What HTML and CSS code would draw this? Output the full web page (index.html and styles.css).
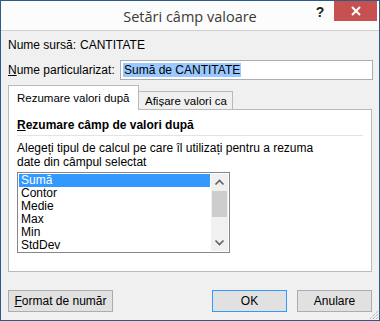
FILE: index.html
```html
<!DOCTYPE html>
<html lang="ro">
<head>
    <meta charset="UTF-8">
    <meta name="viewport" content="width=device-width, initial-scale=1.0">
    <title>Setări câmp valoare</title>
    <link rel="stylesheet" href="styles.css">
</head>
<body>
    <div class="dialog">
        <div class="titlebar">
            <span></span>
            <div class="title">Setări câmp valoare</div>
            <div class="controls">
                <span class="help">?</span>
                <span class="close">
                    <svg width="10" height="10" viewBox="0 0 10 10">
                        <path d="M1 1 L9 9 M9 1 L1 9" stroke="#fff" stroke-width="2"/>
                    </svg>
                </span>
            </div>
        </div>

        <div class="content">
            <div class="row source">
                <span class="label-src">Nume sursă:</span>
                <span>CANTITATE</span>
            </div>

            <div class="row custom">
                <label for="customName"><u>N</u>ume particularizat:</label>
                <div class="textbox" id="customName"><span class="selected-text">Sumă de CANTITATE</span></div>
            </div>

            <div class="tabs">
                <div class="tab active">Rezumare valori după</div>
                <div class="tab">Afișare valori ca</div>
            </div>

            <div class="panel">
                <div class="panel-heading"><u>R</u>ezumare câmp de valori după</div>
                <p class="hint">Alegeți tipul de calcul pe care îl utilizați pentru a rezuma<br>date din câmpul selectat</p>

                <div class="listbox">
                    <ul class="items">
                        <li class="current">Sumă</li>
                        <li>Contor</li>
                        <li>Medie</li>
                        <li>Max</li>
                        <li>Min</li>
                        <li>StdDev</li>
                    </ul>
                    <div class="scrollbar">
                        <svg class="arrow" width="17" height="17" viewBox="0 0 17 17">
                            <path d="M4.5 10.5 L8.5 6.5 L12.5 10.5" fill="none" stroke="#606060" stroke-width="1.6"/>
                        </svg>
                        <div class="track"><div class="thumb"></div></div>
                        <svg class="arrow" width="17" height="17" viewBox="0 0 17 17">
                            <path d="M4.5 6.5 L8.5 10.5 L12.5 6.5" fill="none" stroke="#606060" stroke-width="1.6"/>
                        </svg>
                    </div>
                </div>
            </div>

            <div class="buttons">
                <button class="btn btn-format"><u>F</u>ormat de număr</button>
                <span class="spacer"></span>
                <button class="btn btn-default">OK</button>
                <button class="btn">Anulare</button>
            </div>
        </div>

        <svg class="grip" width="12" height="12" viewBox="0 0 12 12">
            <path d="M11 3 L3 11 M11 6 L6 11 M11 9 L9 11" stroke="#9a9a9a" stroke-width="1" stroke-dasharray="1 1"/>
        </svg>
    </div>
</body>
</html>
```

FILE: styles.css
```css
* {
    box-sizing: border-box;
}

body {
    margin: 0;
    padding: 0;
    font-family: 'Liberation Sans', Arial, sans-serif;
    font-size: 12px;
    color: #000;
    background-color: #f0f0f0;
    white-space: nowrap;
}

.dialog {
    position: relative;
    width: 380px;
    height: 321px;
    border: 1px solid #2b5b86;
    background-color: #f0f0f0;
    display: flex;
    flex-direction: column;
}

.titlebar {
    height: 30px;
    background-color: #fcfcfc;
    border-bottom: 1px solid #cfcfcf;
    display: grid;
    grid-template-columns: 1fr auto 1fr;
}

.title {
    font-family: 'Open Sans', sans-serif;
    font-size: 14.5px;
    color: #3a3a3a;
    line-height: 30px;
    padding-top: 1px;
}

.controls {
    display: flex;
    justify-content: flex-end;
    align-items: flex-start;
    padding-right: 2px;
}

.help {
    width: 24px;
    height: 20px;
    line-height: 22px;
    text-align: center;
    font-weight: bold;
    font-size: 14px;
    color: #222;
    margin-right: 2px;
}

.close {
    width: 43px;
    height: 20px;
    background-color: #c75050;
    display: flex;
    align-items: center;
    justify-content: center;
}

.content {
    padding: 7px 7px 0 7px;
    flex: 1;
    display: flex;
    flex-direction: column;
}

.row {
    display: flex;
    align-items: center;
}

.source {
    line-height: 15px;
    height: 15px;
}

.label-src {
    width: 72px;
}

.custom {
    margin-top: 7px;
    height: 20px;
}

.custom label {
    width: 112px;
}

.textbox {
    flex: 1;
    height: 20px;
    background-color: #fff;
    border: 1px solid #abadb3;
    padding: 1px 2px;
    line-height: 16px;
    margin-right: -1px;
}

.selected-text {
    background-color: #99c9ff;
    padding: 0 1px;
}

.tabs {
    display: flex;
    align-items: flex-start;
    margin-top: 5px;
    height: 24px;
    position: relative;
    z-index: 1;
    font-size: 11.5px;
}

.tab {
    border: 1px solid #b9b9b9;
    border-bottom: none;
}

.tab.active {
    width: 131px;
    height: 25px;
    background-color: #fff;
    padding: 6px 0 0 8px;
}

.tab:not(.active) {
    border-left: none;
    margin-top: 6px;
    height: 18px;
    padding: 0 0 0 6px;
    width: 94px;
    line-height: 18px;
    background-color: #f0f0f0;
}

.panel {
    height: 163px;
    background-color: #fff;
    border: 1px solid #b9b9b9;
    padding: 8px 8px 0 8px;
}

.panel-heading {
    font-weight: bold;
    line-height: 15px;
    padding-bottom: 2px;
    border-bottom: 1px solid #e3e3e3;
}

.hint {
    margin: 5px 0 0 0;
    line-height: 14px;
}

.listbox {
    margin-top: 3px;
    width: 213px;
    height: 81px;
    border: 1px solid #828790;
    padding: 1px;
    display: flex;
    overflow: hidden;
}

.items {
    list-style: none;
    margin: 0;
    padding: 0;
    flex: 1;
}

.items li {
    height: 13px;
    line-height: 13px;
    padding-left: 2px;
}

.items li.current {
    background-color: #3399ff;
    color: #fff;
}

.scrollbar {
    width: 17px;
    background-color: #f0f0f0;
    display: flex;
    flex-direction: column;
    margin-left: 1px;
}

.track {
    flex: 1;
}

.thumb {
    margin: 0 1px;
    height: 26px;
    background-color: #cdcdcd;
}

.arrow {
    display: block;
    flex: none;
}

.buttons {
    display: flex;
    gap: 10px;
    margin-top: 18px;
}

.spacer {
    flex: 1;
}

.btn {
    height: 22px;
    width: 75px;
    font-family: inherit;
    font-size: 12px;
    background-color: #e1e1e1;
    border: 1px solid #adadad;
    padding: 0;
    color: #000;
}

.btn-format {
    width: 105px;
}

.btn-default {
    border-color: #3399ff;
}

.grip {
    position: absolute;
    right: 0;
    bottom: 0;
}
```
